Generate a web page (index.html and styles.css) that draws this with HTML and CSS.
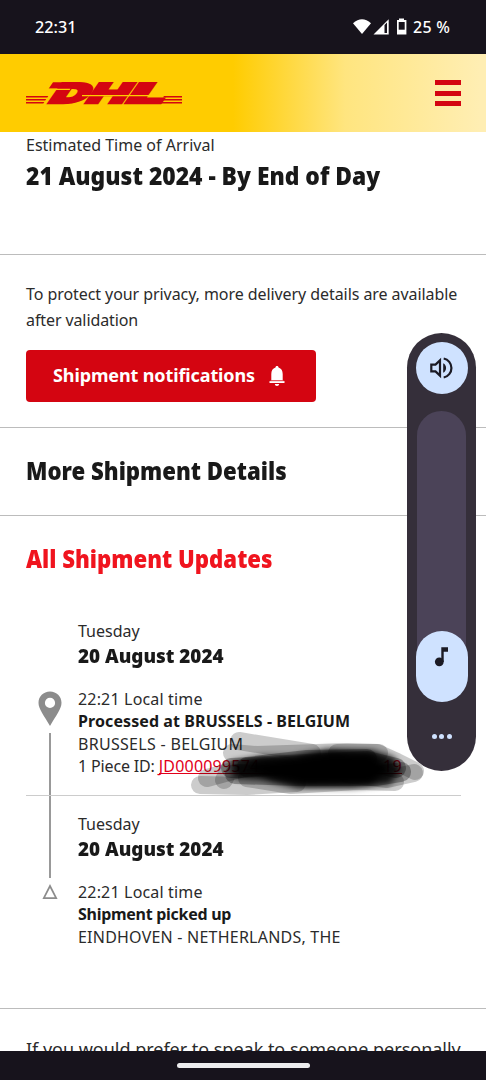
FILE: index.html
```html
<!DOCTYPE html>
<html lang="en">
<head>
<meta charset="utf-8">
<title>Shipment tracking</title>
<link rel="stylesheet" href="styles.css">
</head>
<body>
<div class="phone">
  <div class="status">
    <span class="clock">22:31</span>
    <svg class="signals" width="56" height="20" viewBox="0 0 56 20">
      <path d="M1 6.200Q10 -1.600 19 6.200L10 17Z" fill="#fff"/>
      <path d="M21.500 17.500 36.700 2.200V17.500Z" fill="#fff"/>
      <path d="M32.500 8 35 5.500V16H32.500Z" fill="#17131c"/>
      <path d="M47 1.500h5v1.500h2.400v14.500H45V3h2Z" fill="#fff"/>
      <path d="M46.700 5h6v7.700h-6Z" fill="#17131c"/>
    </svg>
    <span class="battery">25 %</span>
  </div>
  <header class="bar">
    <svg class="logo" width="158" height="24" viewBox="0 0 158 24" fill="#d40511">
      <g class="mark" stroke="#d40511" stroke-width="2.400">
        <text transform="translate(21 22) skewX(-35)" textLength="37" lengthAdjust="spacingAndGlyphs">D</text>
        <text transform="translate(58 22) skewX(-35)" textLength="39" lengthAdjust="spacingAndGlyphs">H</text>
        <text transform="translate(98 22) skewX(-35)" textLength="37" lengthAdjust="spacingAndGlyphs">L</text>
      </g>
      <path d="M27 1.300H45L41 7.600H22.700Z"/>
      <path d="M23 7.700H44.500L43.600 9H22ZM56 14H137.500v1.200H56Z" fill="#ffcc00"/>
      <path d="M0 15h22.300l-1 1.500H0ZM0 18h20.200l-1 1.500H0ZM0 21h18.300l-1 1.500H0ZM138 15H156v1.500h-19ZM136 18H156v1.500h-21ZM134 21H156v1.500h-23Z"/>
    </svg>
    <div class="menu"><i></i><i></i><i></i></div>
  </header>
  <main>
    <section class="eta">
      <div class="label"><span>Estimated Time of Arrival</span></div>
      <h1>21 August 2024 - By End of Day</h1>
    </section>
    <section class="privacy">
      <p><span class="w-p1">To protect your privacy, more delivery details are available</span><br><span class="w-p2">after validation</span></p>
      <button class="notify"><span class="w-btn">Shipment notifications</span>
        <svg width="16" height="22" viewBox="0 0 16 22" fill="#fff"><path d="M8 1c1 0 1.500.6 1.500 1.500C12.300 3.300 13.700 5.700 13.700 9v6.200l1.800 1V18H.5v-1.800l1.800-1V9c0-3.300 1.400-5.700 4.200-6.500C6.500 1.600 7 1 8 1ZM5.800 19h4.400c-.2 1.300-1 2-2.200 2s-2-.7-2.200-2Z"/><path d="M1 15.700H15" stroke="#d40511" stroke-width=".8"/></svg>
      </button>
    </section>
    <section class="more"><h2>More Shipment Details</h2></section>
    <section class="updates">
      <h2 class="red">All Shipment Updates</h2>
      <div class="event first">
        <div class="rail">
          <svg width="24" height="36" viewBox="0 0 24 36"><path d="M12 .5C5.400.5.500 5.500.500 11.700.500 18 6 24.500 12 35 18 24.500 23.500 18 23.500 11.700 23.500 5.500 18.600.500 12 .500Zm0 6.300a5.100 5.100 0 1 1 0 10.200 5.100 5.100 0 0 1 0-10.200Z" fill="#8c8c8c" fill-rule="evenodd"/></svg>
          <i class="line"></i>
        </div>
        <div class="info">
          <div class="day">Tuesday</div>
          <h3>20 August 2024</h3>
          <div><span class="w-time">22:21 Local time</span></div>
          <div><b class="w-proc">Processed at BRUSSELS - BELGIUM</b></div>
          <div><span class="w-caps">BRUSSELS - BELGIUM</span></div>
          <div class="piece"><span class="w-piece">1 Piece ID:</span><a class="id"><span>JD000099574</span><span>19</span></a></div>
        </div>
      </div>
      <div class="event second">
        <div class="rail">
          <i class="line short"></i>
          <svg width="16" height="16" viewBox="0 0 16 16"><path d="M8 2 14.200 14.200H1.800Z" fill="none" stroke="#8c8c8c" stroke-width="1.700"/></svg>
        </div>
        <div class="info">
          <div class="day">Tuesday</div>
          <h3>20 August 2024</h3>
          <div><span class="w-time">22:21 Local time</span></div>
          <div><b class="w-pick">Shipment picked up</b></div>
          <div><span class="w-ein">EINDHOVEN - NETHERLANDS, THE</span></div>
        </div>
      </div>
    </section>
    <section class="contact"><span>If you would prefer to speak to someone personally</span></section>
  </main>
  <footer class="nav"><i></i></footer>

  <svg class="scribble" width="240" height="64" viewBox="0 0 240 64" fill="none" stroke="#000" stroke-linecap="round" stroke-linejoin="round">
    <defs><filter id="soft" x="-20%" y="-60%" width="140%" height="220%"><feGaussianBlur stdDeviation="3"/></filter></defs>
    <g stroke-opacity=".2" stroke-width="18">
      <path d="M52 9 125 21"/>
      <path d="M45 21 70 23 160 20 192 21"/>
      <path d="M13 53 60 54 110 51"/>
      <path d="M20 46 60 35 150 31"/>
      <path d="M37 48 42 38 100 34"/>
      <path d="M150 21 190 21 210 30 228 39"/>
      <path d="M160 42 200 47 227 41"/>
      <path d="M60 46 104 53 170 49 208 50"/>
    </g>
    <g stroke-opacity=".3" stroke-width="20">
      <path d="M44 36 100 33 180 29 209 36"/>
      <path d="M48 42 110 44 190 44 214 40"/>
      <path d="M60 35 120 28 180 27"/>
    </g>
    <path d="M44 30 75 24 105 24 140 17 185 18 207 25 214 38 203 52 165 56 110 56 75 48 46 46Z" fill="#000" fill-opacity=".85" stroke="none" filter="url(#soft)"/>
    <path d="M66 35 110 30 145 25 182 26 199 37 182 48 120 49 85 42Z" fill="#000" stroke-width="7" filter="url(#soft)"/>
  </svg>

  <aside class="volume">
    <div class="sound"><svg width="26" height="26" viewBox="0 0 26 26" fill="none" stroke="#1b1a24" stroke-width="2.200"><path d="M2.300 9.600H6.500L11 5.400V20.600L6.500 16.400H2.300Z"/><path d="M14.700 3.500A9.700 9.700 0 0 1 14.700 22.500"/><path d="M14.200 8.200C18 10 18 16 14.200 17.800Z" fill="#1b1a24" stroke="none"/></svg></div>
    <div class="track"><div class="thumb"><svg width="16" height="22" viewBox="0 0 16 22" fill="#1b1a24"><circle cx="5.300" cy="15.800" r="4.400"/><path d="M7.300 1.300H14V5.700H9.700V16H7.300Z"/></svg></div></div>
    <div class="dots"><i></i><i></i><i></i></div>
  </aside>
</div>
</body>
</html>
```
FILE: styles.css
```css
* { box-sizing: border-box; }
body { margin: 0; background: #fff; }
.phone {
  position: relative; width: 486px; height: 1080px; overflow: hidden;
  display: flex; flex-direction: column;
  font-family: "Noto Sans", sans-serif; font-size: 16px; color: #2b2b2b;
}
.phone span, .phone b, h1, h2, h3, .day { white-space: nowrap; }
.phone b { color: #191919; }
.status {
  flex: none; height: 54px; background: #17131c; color: #fff;
  display: flex; align-items: center; padding: 0 35px; font-weight: 500;
}
.clock { flex: 1; font-size: 16.200px; }
.signals { margin-right: 5px; }
.battery { width: 38px; letter-spacing: .3px; }
.bar {
  flex: none; height: 78px; padding: 0 25px 0 26px;
  display: flex; align-items: center; justify-content: space-between;
  background: linear-gradient(90deg, #ffcc00 0, #ffcc00 233px, #ffe57f 345px, #ffeeb3 480px);
}
.logo { overflow: visible; }
.mark { font: 900 27.200px Inter, sans-serif; }
.menu { width: 26px; height: 26px; display: flex; flex-direction: column; justify-content: space-between; }
.menu i { height: 5px; background: #d40511; }
main { flex: none; height: 919px; overflow: hidden; background: #fff; }
section { border-bottom: 1px solid #bcbcbc; padding: 0 26px; }
h1, h2, h3 { margin: 0; font-weight: 900; color: #191919; transform-origin: 0 50%; width: max-content; }
h1, h2 { font-size: 25px; line-height: 34px; }
h1 { transform: scaleX(.914); }
h2 { transform: scaleX(.887); }
h3 { font-size: 20px; line-height: 28px; transform: scaleX(.942); }
.phone .red { color: #f0141e; }
.eta { height: 123px; }
.label { line-height: 26px; }
.privacy { height: 173px; padding-top: 26px; }
.privacy p { margin: 0; line-height: 26px; }
.w-p1 { letter-spacing: -.07px; }
.w-p2 { letter-spacing: -.1px; }
.notify {
  width: 290px; height: 52px; margin-top: 17px; padding: 0 31px 2px 27px; border: 0; border-radius: 4px;
  background: #d40511; color: #fff; display: flex; align-items: center; justify-content: space-between;
  font: 700 18px "Noto Sans", sans-serif;
}
.notify svg { position: relative; top: 1px; }
.w-btn { letter-spacing: -.12px; }
.more { height: 88px; padding-top: 25px; }
.updates { height: 493px; padding-top: 25px; }
.event { display: flex; line-height: 22.300px; }
.event h3 { margin: 0 0 18px; }
.first { height: 192px; margin-top: 28px; margin-right: -1px; border-bottom: 1.500px solid #ccc; }
.first .info { padding-top: 16px; }
.first { margin-top: 29px; }
.rail { width: 52px; flex: none; display: flex; flex-direction: column; align-items: center; padding-right: 4px; }
.first .rail { padding-top: 87px; }
.line { flex: 1; width: 1.500px; margin-top: 6px; background: #999; }
.line.short { flex: none; height: 82px; margin: 0 0 6px; }
.second .info { padding-top: 17px; }
.day { line-height: 22px; }
.w-time { letter-spacing: .17px; }
.w-proc { letter-spacing: .09px; }
.w-caps { letter-spacing: .3px; }
.w-ein { letter-spacing: .22px; }
.w-pick { letter-spacing: -.28px; }
.w-piece { letter-spacing: -.15px; }
.piece { display: flex; gap: 4px; }
.id { width: 243px; display: flex; justify-content: space-between; color: #e2001a; border-bottom: 1.500px solid #e2001a; height: 19px; letter-spacing: .2px; }
.contact { border: 0; padding-top: 28px; font-size: 18px; line-height: 24px; letter-spacing: -.02px; }
.nav { flex: none; height: 29px; background: #17131c; display: flex; justify-content: center; padding-top: 12px; }
.nav i { width: 133px; height: 5px; border-radius: 3px; background: #ececee; }
.scribble { position: absolute; left: 187px; top: 732px; overflow: visible; }
.volume {
  position: absolute; left: 407px; top: 333px; width: 69px; height: 438px; border-radius: 34.500px;
  background: #352f3a; display: flex; flex-direction: column; align-items: center; padding-top: 9px;
}
.sound { width: 52px; height: 52px; border-radius: 50%; background: #cfe2ff; display: grid; place-items: center; }
.track { width: 49px; height: 290px; margin-top: 17px; border-radius: 25px; background: #4b4358; display: flex; justify-content: center; align-items: flex-end; }
.thumb { flex: none; width: 52px; height: 71px; border-radius: 26px; background: #cfe2ff; margin-bottom: -1px; display: flex; justify-content: center; padding-top: 15px; }
.dots { display: flex; gap: 2.500px; margin-top: 33px; }
.dots i { width: 5px; height: 5px; border-radius: 50%; background: #cfe2ff; }
```
